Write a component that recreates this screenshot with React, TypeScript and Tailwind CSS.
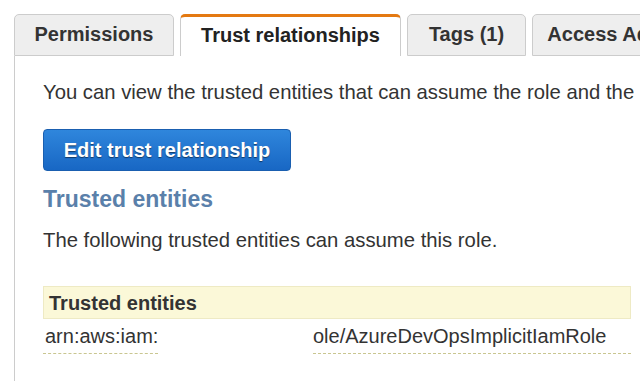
import React from 'react'

const tabs = [
  { name: 'Permissions', width: 'w-[160px]', active: false },
  { name: 'Trust relationships', width: 'w-[221px]', active: true },
  { name: 'Tags (1)', width: 'w-[119px]', active: false },
  { name: 'Access Advisor', width: 'w-[180px]', active: false },
]

export default function App() {
  return (
    <div className="w-[640px] h-[381px] overflow-hidden bg-white pl-[14px] pt-[14px] font-['Liberation_Sans',Arial,sans-serif] text-[#333]">
      {/* Tabs */}
      <div className="flex items-end gap-[6px] w-[720px]">
        {tabs.map((tab) =>
          tab.active ? (
            <div
              key={tab.name}
              className={`${tab.width} shrink-0 h-[42px] pb-[4px] flex items-center justify-center bg-white border-x border-[#ccc] border-t-[3px] border-t-[#e47911] rounded-t-[5px] text-[20px] font-bold text-[#222]`}>
              {tab.name}
            </div>
          ) : (
            <div
              key={tab.name}
              className={`${tab.width} shrink-0 h-[42px] pb-[2px] flex items-center justify-center bg-[#eeeeee] border border-[#cccccc] rounded-t-[5px] text-[20px] font-bold text-[#333]`}>
              <span className="whitespace-nowrap">{tab.name}</span>
            </div>
          )
        )}
      </div>

      {/* Panel */}
      <div className="border-l border-[#cccccc] pl-[28px] pt-[24px] h-[400px]">
        <p className="text-[20.3px] leading-[24px] whitespace-nowrap text-[#333]">
          You can view the trusted entities that can assume the role and the access conditions for the role.
        </p>

        <button className="mt-[25px] w-[248px] h-[42px] rounded-[4px] border border-[#1a5fb0] bg-gradient-to-b from-[#2f86dc] to-[#1867c4] text-white text-[20px] font-bold [text-shadow:0_1px_1px_rgba(0,0,0,0.5)]">
          Edit trust relationship
        </button>

        <h2 className="mt-[14px] text-[23px] leading-[28px] font-bold text-[#5a80aa]">
          Trusted entities
        </h2>

        <p className="mt-[15px] text-[20.3px] leading-[24px] text-[#333]">
          The following trusted entities can assume this role.
        </p>

        <div className="mt-[34px] w-[588px]">
          <div className="h-[33px] flex items-center bg-[#fbf8d8] border border-[#eeeac4] pl-[5px] text-[20px] font-bold text-[#333]">
            Trusted entities
          </div>
          <div className="flex items-start pt-[4px] text-[20px] leading-[26px] text-[#333]">
            <div className="w-[270px] shrink-0">
              <span className="inline-block pl-[2px] pb-[4px] border-b border-dashed border-[#c9c690]">
                arn:aws:iam:
              </span>
            </div>
            <div className="flex-1 pb-[4px] border-b border-dashed border-[#c9c690] whitespace-nowrap">
              ole/AzureDevOpsImplicitIamRole
            </div>
          </div>
        </div>
      </div>
    </div>
  )
}
